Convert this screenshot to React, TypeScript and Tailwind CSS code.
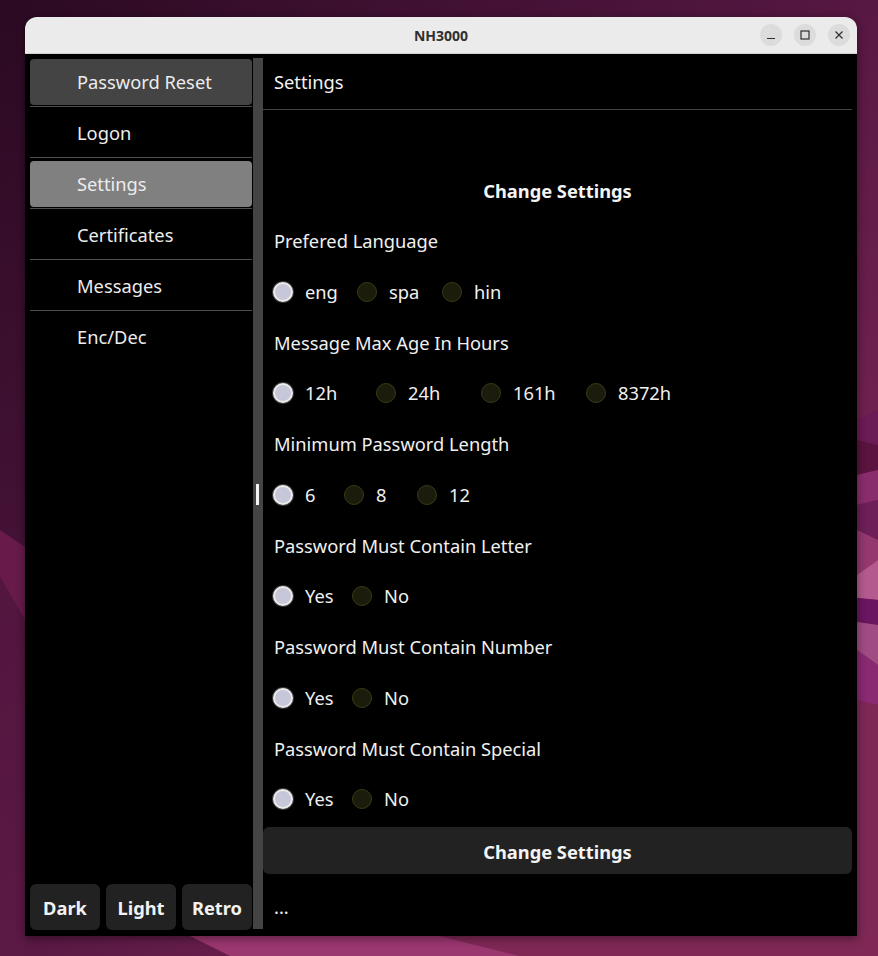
import React from "react";

function Radio({ on }: { on: boolean }) {
  return on ? (
    <span className="w-[20px] h-[20px] rounded-full bg-[#c6c7d9] border-2 border-[#ececec] shadow-[0_0_0_1px_#3a3a3a] shrink-0" />
  ) : (
    <span className="w-[20px] h-[20px] rounded-full bg-[#1c1c0d] border-[1.5px] border-[#3a3a14] shrink-0" />
  );
}

function RadioRow({ items }: { items: { label: string; w?: string; on?: boolean }[] }) {
  return (
    <div className="h-[50.75px] flex items-center pl-[10px]">
      {items.map((it, i) => (
        <div key={i} className={`flex items-center ${it.w ?? ""}`}>
          <Radio on={!!it.on} />
          <span className="ml-[12px] text-[18.3px] leading-[24px] text-[#f0f0f0]">{it.label}</span>
        </div>
      ))}
    </div>
  );
}

function Label({ children }: { children: React.ReactNode }) {
  return (
    <div className="h-[50.75px] flex items-center pl-[11px] text-[18.3px] leading-[24px] text-[#f0f0f0]">{children}</div>
  );
}

function MenuItem({ label, bg, sep }: { label: string; bg?: string; sep?: boolean }) {
  return (
    <div>
      <div className={`h-[46px] rounded-[4px] flex items-center pl-[47px] text-[18.3px] leading-[24px] text-[#ececec] ${bg ?? ""}`}>
        {label}
      </div>
      {sep && (
        <div className="pt-[1px] pb-[3px]">
          <div className="h-px bg-[#4f4f4f]" />
        </div>
      )}
    </div>
  );
}

export default function App() {
  return (
    <div className="relative w-[878px] h-[956px] overflow-hidden font-['Noto_Sans',sans-serif]">
      <svg className="absolute inset-0" width="878" height="956" viewBox="0 0 878 956">
        <defs>
          <linearGradient id="wp" x1="0" y1="0" x2="1" y2="1">
            <stop offset="0" stopColor="#2b0a22" />
            <stop offset="0.45" stopColor="#521640" />
            <stop offset="1" stopColor="#8e2d60" />
          </linearGradient>
        </defs>
        <rect width="878" height="956" fill="url(#wp)" />
        <polygon points="0,530 25,547 25,620 0,577" fill="#681b4b" />
        <polygon points="0,577 25,620 25,956 0,956" fill="#5f1a47" opacity="0.5" />
        <polygon points="857,420 878,410 878,445 857,440" fill="#6b1b55" />
        <polygon points="857,440 878,445 878,470 857,475" fill="#5a143f" />
        <polygon points="857,475 878,470 878,500 857,505" fill="#8a2d6c" />
        <polygon points="857,505 878,500 878,540 857,530" fill="#6e1f58" />
        <polygon points="857,530 878,540 878,560 857,575" fill="#94386f" />
        <polygon points="857,575 878,560 878,600 857,598" fill="#b55a8f" />
        <polygon points="857,598 878,600 878,625 857,622" fill="#6a1660" />
        <polygon points="857,622 878,625 878,665 857,650" fill="#a04b82" />
        <polygon points="857,650 878,665 878,705 857,700" fill="#8a2a72" />
        <polygon points="857,700 878,705 878,956 857,956" fill="#7e2856" />
        <polygon points="190,936 440,936 520,956 230,956" fill="#9a3670" />
        <polygon points="520,956 440,936 878,936 878,956" fill="#7f2855" />
      </svg>

      <div className="relative pt-[17px] pl-[25px]">
        <div className="w-[832px] h-[919px] flex flex-col rounded-t-[12px] overflow-hidden shadow-[0_2px_10px_rgba(0,0,0,0.45)]">
          {/* title bar */}
          <div className="relative h-[37px] bg-[#ebebeb] border-b border-[#d2d2d2] flex items-center justify-center shrink-0">
            <span className="text-[14px] font-bold text-[#2f2f2f] font-['Noto_Sans',sans-serif]">NH3000</span>
            <div className="absolute right-[7px] top-[7px] flex gap-[12px]">
              <div className="w-[22px] h-[22px] rounded-full bg-[#dcdcdc] flex items-center justify-center">
                <svg width="10" height="10" viewBox="0 0 10 10">
                  <path d="M1 8.5H9" stroke="#2f2f2f" strokeWidth="1.2" />
                </svg>
              </div>
              <div className="w-[22px] h-[22px] rounded-full bg-[#dcdcdc] flex items-center justify-center">
                <svg width="10" height="10" viewBox="0 0 10 10">
                  <rect x="1" y="1" width="8" height="8" fill="none" stroke="#2f2f2f" strokeWidth="1.2" />
                </svg>
              </div>
              <div className="w-[22px] h-[22px] rounded-full bg-[#dcdcdc] flex items-center justify-center">
                <svg width="10" height="10" viewBox="0 0 10 10">
                  <path d="M1.5 1.5L8.5 8.5M8.5 1.5L1.5 8.5" stroke="#2f2f2f" strokeWidth="1.2" />
                </svg>
              </div>
            </div>
          </div>

          {/* content */}
          <div className="flex-1 bg-black flex pt-[5px] pb-[6px] px-[5px] min-h-0">
            {/* sidebar */}
            <div className="w-[222px] flex flex-col">
              <MenuItem label="Password Reset" bg="bg-[#444444]" sep />
              <MenuItem label="Logon" sep />
              <MenuItem label="Settings" bg="bg-[#808080]" sep />
              <MenuItem label="Certificates" sep />
              <MenuItem label="Messages" sep />
              <MenuItem label="Enc/Dec" />
              <div className="flex-1" />
              <div className="flex gap-[6px]">
                {["Dark", "Light", "Retro"].map((t) => (
                  <div
                    key={t}
                    className="w-[70px] h-[46px] rounded-[6px] bg-[#222222] flex items-center justify-center pt-[2px] text-[18.3px] font-bold text-[#f2f2f2]"
                  >
                    {t}
                  </div>
                ))}
              </div>
            </div>

            {/* splitter */}
            <div className="relative ml-[1px] w-[10px] -mt-[1px] mb-[1px] bg-[#444444]">
              <div className="absolute left-[3px] top-[426px] w-[3px] h-[21px] bg-[#f4f4f4]" />
            </div>

            {/* main */}
            <div className="flex-1 flex flex-col">
              <div className="h-[51px] border-b border-[#444444] pl-[11px] pt-[11px] text-[18.3px] leading-[24px] text-[#f2f2f2] shrink-0">
                Settings
              </div>
              <div className="h-[55px] shrink-0" />
              <div className="h-[50.75px] flex items-center justify-center text-[18.3px] font-bold text-[#f4f4f4]">
                Change Settings
              </div>
              <Label>Prefered Language</Label>
              <RadioRow
                items={[
                  { label: "eng", w: "w-[84px]", on: true },
                  { label: "spa", w: "w-[85px]" },
                  { label: "hin" },
                ]}
              />
              <Label>Message Max Age In Hours</Label>
              <RadioRow
                items={[
                  { label: "12h", w: "w-[103px]", on: true },
                  { label: "24h", w: "w-[105px]" },
                  { label: "161h", w: "w-[105px]" },
                  { label: "8372h" },
                ]}
              />
              <Label>Minimum Password Length</Label>
              <RadioRow
                items={[
                  { label: "6", w: "w-[71px]", on: true },
                  { label: "8", w: "w-[73px]" },
                  { label: "12" },
                ]}
              />
              <Label>Password Must Contain Letter</Label>
              <RadioRow items={[{ label: "Yes", w: "w-[79px]", on: true }, { label: "No" }]} />
              <Label>Password Must Contain Number</Label>
              <RadioRow items={[{ label: "Yes", w: "w-[79px]", on: true }, { label: "No" }]} />
              <Label>Password Must Contain Special</Label>
              <RadioRow items={[{ label: "Yes", w: "w-[79px]", on: true }, { label: "No" }]} />
              <div className="mt-[2px] h-[47px] shrink-0 rounded-[6px] bg-[#222222] flex items-center justify-center pt-[2px] text-[18.3px] font-bold text-[#f4f4f4]">
                Change Settings
              </div>
              <div className="flex-1 pl-[11px] pt-[21px] text-[18.3px] leading-[24px] text-[#f2f2f2]">...</div>
            </div>
          </div>
        </div>
      </div>
    </div>
  );
}
